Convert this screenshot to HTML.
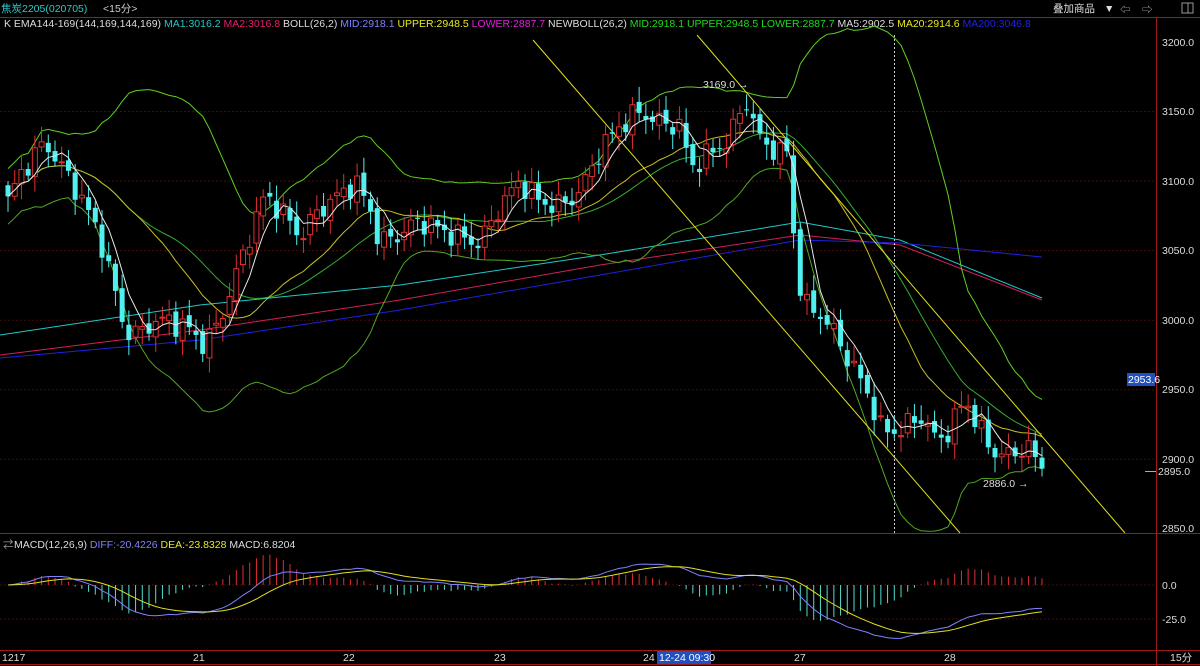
<!DOCTYPE html><html><head><meta charset="utf-8"><style>
html,body{margin:0;padding:0;background:#000;width:1200px;height:666px;overflow:hidden}
svg{display:block}
text{font-family:"Liberation Sans","Noto Sans CJK SC",sans-serif;font-size:10.5px}
</style></head><body>
<svg id="s" width="1200" height="666" xmlns="http://www.w3.org/2000/svg">
<rect width="1200" height="666" fill="#000"/>
<text x="1" y="12" fill="#30c8c8">焦炭2205(020705)</text><text x="103" y="12" fill="#ccc">&lt;15分&gt;</text>
<text x="1053" y="12" fill="#ddd">叠加商品</text><text x="1104" y="12" fill="#ddd" font-size="9">▼</text>
<text x="1120" y="13" fill="#aaa" font-size="13">⇦</text><text x="1142" y="13" fill="#aaa" font-size="13">⇨</text>
<rect x="1182" y="3" width="11" height="10" fill="none" stroke="#999"/><line x1="1188" y1="3" x2="1188" y2="13" stroke="#999"/>
<line x1="0" y1="17.5" x2="1200" y2="17.5" stroke="#a01818"/>
<line x1="1156.5" y1="17" x2="1156.5" y2="666" stroke="#a01818"/>
<line x1="0" y1="533.5" x2="1200" y2="533.5" stroke="#a01818"/>
<line x1="0" y1="650.5" x2="1200" y2="650.5" stroke="#a01818"/>
<line x1="0" y1="664.5" x2="1200" y2="664.5" stroke="#a01818"/>
<g id="grid"></g>
<text y="27" font-size="10"><tspan x="4" fill="#ddd">K  EMA144-169(144,169,144,169) </tspan><tspan fill="#20c8c8">MA1:3016.2 </tspan><tspan fill="#e0206a">MA2:3016.8 </tspan><tspan fill="#ddd">BOLL(26,2) </tspan><tspan fill="#8080ff">MID:2918.1 </tspan><tspan fill="#e8e820">UPPER:2948.5 </tspan><tspan fill="#e020e0">LOWER:2887.7 </tspan><tspan fill="#ddd">NEWBOLL(26,2) </tspan><tspan fill="#20d820">MID:2918.1 UPPER:2948.5 LOWER:2887.7 </tspan><tspan fill="#ddd">MA5:2902.5 </tspan><tspan fill="#e8e820">MA20:2914.6 </tspan><tspan fill="#2020e0">MA200:3046.8</tspan></text>
<g id="main"></g>
<text x="14" y="548" font-size="10"><tspan fill="#ddd">MACD(12,26,9) </tspan><tspan fill="#8080ff">DIFF:-20.4226 </tspan><tspan fill="#e8e820">DEA:-23.8328 </tspan><tspan fill="#ddd">MACD:6.8204</tspan></text>
<text x="3" y="548" fill="#999" font-size="9">⇄</text>
<g id="macd"></g>
<g fill="#ddd" font-size="10">
<text x="1162" y="46">3200.0</text><text x="1162" y="115">3150.0</text><text x="1162" y="185">3100.0</text><text x="1162" y="254">3050.0</text><text x="1162" y="324">3000.0</text><text x="1162" y="393">2950.0</text><text x="1162" y="463">2900.0</text><text x="1162" y="532">2850.0</text>
<text x="1162" y="589">0.0</text><text x="1162" y="623">-25.0</text>
<text x="2" y="661">1217</text><text x="193" y="661">21</text><text x="343" y="661">22</text><text x="494" y="661">23</text><text x="643" y="661">24</text><text x="794" y="661">27</text><text x="944" y="661">28</text><text x="1170" y="661">15分</text>
</g>
<rect x="657" y="651" width="54" height="13" fill="#2050c0"/><text x="659" y="661" fill="#fff" font-size="10">12-24 09:30</text>
<rect x="1127" y="373" width="28" height="13" fill="#2050c0"/><text x="1128" y="383" fill="#fff" font-size="10">2953.6</text>
<line x1="1145" y1="471.5" x2="1156" y2="471.5" stroke="#aaa"/><text x="1158" y="475" fill="#ddd" font-size="10">2895.0</text>
<text x="703" y="88" fill="#ddd" font-size="10">3169.0 →</text>
<text x="983" y="487" fill="#ddd" font-size="10">2886.0 →</text>
</svg>
<script>
var NS="http://www.w3.org/2000/svg";
function el(p,t,a){var e=document.createElementNS(NS,t);for(var k in a)e.setAttribute(k,a[k]);p.appendChild(e);return e;}
var main=document.getElementById('main'),mg=document.getElementById('macd'),grid=document.getElementById('grid');
function Y(p){return 42+(3200-p)*1.391;}
[3150,3100,3050,3000,2950,2900].forEach(function(p){el(grid,'line',{x1:0,x2:1156,y1:Y(p),y2:Y(p),stroke:'#4a0808','stroke-dasharray':'2,2'});});
[585,619].forEach(function(y){el(grid,'line',{x1:0,x2:1156,y1:y,y2:y,stroke:'#4a0808','stroke-dasharray':'2,2'});});
var kp=[[8,3085],[20,3105],[45,3128],[60,3112],[80,3090],[100,3060],[115,3020],[125,2992],[140,2990],[150,2998],[170,3000],[190,2993],[205,2982],[220,3000],[235,3030],[250,3062],[265,3090],[280,3080],[300,3060],[320,3080],[340,3090],[355,3100],[370,3080],[380,3055],[400,3062],[420,3072],[440,3065],[460,3060],[480,3055],[500,3082],[520,3100],[540,3085],[560,3082],[580,3092],[600,3122],[620,3140],[640,3150],[660,3142],[680,3140],[690,3110],[710,3120],[730,3130],[745,3160],[760,3130],[780,3120],[790,3122],[795,3040],[805,3010],[820,3005],[835,2990],[850,2970],[870,2945],[880,2922],[900,2920],[920,2932],[935,2915],[950,2920],[965,2945],[980,2920],[995,2905],[1010,2902],[1025,2910],[1042,2895]];
function interp(x){for(var i=1;i<kp.length;i++){if(x<=kp[i][0]){var a=kp[i-1],b=kp[i];return a[1]+(b[1]-a[1])*(x-a[0])/(b[0]-a[0]);}}return kp[kp.length-1][1];}
var N=155,dx=(1042-8)/(N-1),C=[],O=[],H=[],L=[],X=[];
for(var i=0;i<N;i++){var x=8+i*dx;X.push(x);var c=interp(x)+Math.sin(i*1.7)*6+Math.cos(i*2.9)*4;C.push(c);}
for(i=0;i<N;i++){var o=i?C[i-1]+Math.sin(i*3.1)*3:C[0]+8;O.push(o);var m=Math.max(o,C[i]),n=Math.min(o,C[i]);H.push(m+3+Math.abs(Math.sin(i*5.3))*8);L.push(n-3-Math.abs(Math.cos(i*4.7))*8);}
function ma(n){var r=[];for(var i=0;i<N;i++){var s=0,k=0;for(var j=Math.max(0,i-n+1);j<=i;j++){s+=C[j];k++;}r.push(s/k);}return r;}
function pl(arr,col,g,sw,fy){var p=arr.map(function(v,i){return X[i].toFixed(1)+','+(fy?fy(v):Y(v)).toFixed(1)}).join(' ');el(g||main,'polyline',{points:p,fill:'none',stroke:col,'stroke-width':sw||1});}
function hp(pts,col){el(main,'polyline',{points:pts,fill:'none',stroke:col,'stroke-width':1});}
hp("0,335 200,305 400,285 600,255 800,222 900,240 1042,298","#20c8c8");
hp("0,355 200,330 400,300 600,265 800,235 900,245 1042,300","#d0205a");
hp("0,358 200,340 400,310 600,275 800,240 900,243 1042,257","#2020e0");
var m26=ma(26),up=[],lo=[];
for(i=0;i<N;i++){var s=0,k=0;for(var j=Math.max(0,i-25);j<=i;j++){s+=(C[j]-m26[i])*(C[j]-m26[i]);k++;}var sd=Math.sqrt(s/k);sd=Math.max(sd,10);up.push(m26[i]+2*sd);lo.push(m26[i]-2*sd);}
pl(up,'#60d020');pl(lo,'#50a820');pl(m26,'#30b030');
pl(ma(20),'#c8c020');
el(main,'line',{x1:533,y1:40,x2:960,y2:533,stroke:'#e0e020'});
el(main,'line',{x1:697,y1:35,x2:1125,y2:533,stroke:'#e0e020'});
el(main,'line',{x1:894.5,y1:35,x2:894.5,y2:533,stroke:'#ccc','stroke-dasharray':'2,2'});
for(i=0;i<N;i++){var upc=C[i]>=O[i],col=upc?'#e03030':'#50f0f0',x=X[i];
el(main,'line',{x1:x,x2:x,y1:Y(H[i]),y2:Y(L[i]),stroke:col});
var t=Y(Math.max(O[i],C[i])),b=Y(Math.min(O[i],C[i]));
el(main,'rect',{x:x-2.5,y:t,width:5,height:Math.max(1,b-t),fill:upc?'#000':col,stroke:col,'stroke-width':upc?1:0});}
pl(ma(5),'#e8e8e8');
var e12=C[0],e26=C[0],dea=0,D=[],E=[],Hh=[];
for(i=0;i<N;i++){e12=e12+(C[i]-e12)*2/13;e26=e26+(C[i]-e26)*2/27;var d=e12-e26;dea=dea+(d-dea)*2/10;D.push(d);E.push(dea);Hh.push(2*(d-dea));}
function MY(v){return 585-v*1.1;}
for(i=0;i<N;i++){var h=Hh[i];el(mg,'line',{x1:X[i],x2:X[i],y1:585,y2:MY(h),stroke:h>=0?'#e03030':'#50e0d0'});}
pl(D,'#8080ff',mg,1,MY);pl(E,'#e0e020',mg,1,MY);
</script>
</body></html>
